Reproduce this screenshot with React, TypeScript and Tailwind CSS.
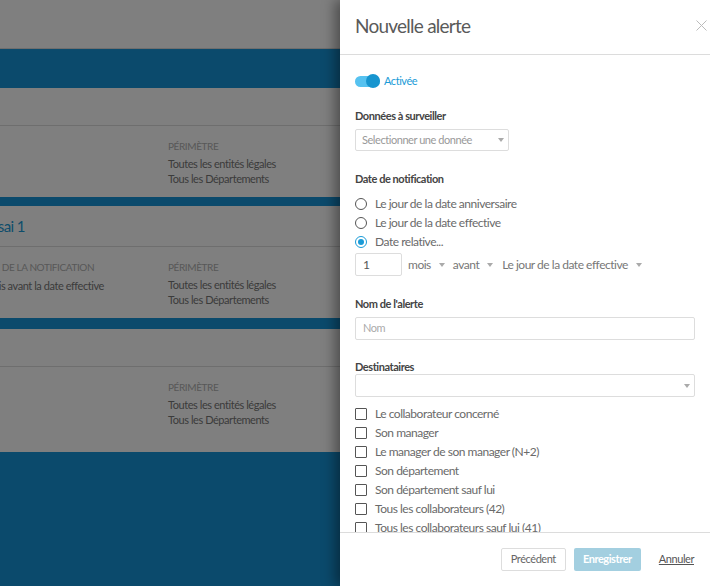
import React from "react";

const Caret = ({ className = "" }: { className?: string }) => (
  <span className={`inline-block w-0 h-0 border-l-[3px] border-r-[3px] border-t-[4px] border-l-transparent border-r-transparent border-t-[#aaa] ${className}`} />
);

const Checkbox = ({ label }: { label: string }) => (
  <div className="flex items-center h-[19px] gap-[8px]">
    <span className="w-[12px] h-[12px] border-[1.5px] border-[#555] rounded-[1px] shrink-0" />
    <span className="text-[12px] text-[#6a6a6a] leading-none tracking-[-0.04em]">{label}</span>
  </div>
);

const Radio = ({ label, checked = false }: { label: string; checked?: boolean }) => (
  <div className="flex items-center h-[19px] gap-[8px]">
    {checked ? (
      <span className="w-[12px] h-[12px] rounded-full border-[1.5px] border-[#1a9bd7] flex items-center justify-center shrink-0">
        <span className="w-[6px] h-[6px] rounded-full bg-[#1a9bd7]" />
      </span>
    ) : (
      <span className="w-[12px] h-[12px] rounded-full border-[1.5px] border-[#555] shrink-0" />
    )}
    <span className="text-[12px] text-[#6a6a6a] leading-none tracking-[-0.04em]">{label}</span>
  </div>
);

const Card = ({ title, notif, notifValue, top }: { title?: string; notif?: boolean; notifValue?: string; top: number }) => (
  <div className="bg-white">
    <div className={`border-b border-[#dcdcdc] flex items-center ${top === 2 ? "h-[41px]" : "h-[38px]"}`}>
      {title && <span className="text-[15px] text-[#1a9bd7] ml-[-16px] tracking-[-0.04em]">{title}</span>}
    </div>
    <div className={`flex ${top === 3 ? "h-[85px]" : "h-[71px]"}`}>
      <div className="w-[192px] ml-[-24px] pt-[13px]">
        {notif && (
          <>
            <div className="text-[10px] uppercase text-[#b0b0b0] leading-[14px] tracking-[-0.04em]">Date de la notification</div>
            <div className="text-[11px] text-[#777] leading-[14px] mt-[5px] tracking-[-0.04em]">{notifValue}</div>
          </>
        )}
      </div>
      <div className="pt-[13px]">
        <div className="text-[10px] uppercase text-[#b0b0b0] leading-[14px] tracking-[-0.04em]">Périmètre</div>
        <div className="text-[11px] text-[#777] leading-[14.5px] mt-[4px] tracking-[-0.04em]">Toutes les entités légales</div>
        <div className="text-[11px] text-[#777] leading-[14.5px] tracking-[-0.04em]">Tous les Départements</div>
      </div>
    </div>
  </div>
);

export default function App() {
  return (
    <div className="relative w-[710px] h-[586px] overflow-hidden bg-[#1694d8]" style={{ fontFamily: "Lato, 'Open Sans', sans-serif" }}>
      {/* underlying page */}
      <div className="flex flex-col">
        <div className="h-[49px] bg-white border-b border-[#dcdcdc]" />
        <div className="h-[39px] bg-[#1694d8]" />
        <Card top={1} />
        <div className="h-[9px] bg-[#1694d8]" />
        <Card top={2} title="Essai 1" notif notifValue="1 mois avant la date effective" />
        <div className="h-[11px] bg-[#1694d8]" />
        <Card top={3} />
      </div>
      {/* overlay */}
      <div className="absolute inset-0 bg-black/50" />
      {/* panel */}
      <div className="absolute top-0 right-0 w-[370px] h-[586px] bg-white flex flex-col shadow-[-5px_0_12px_rgba(0,0,0,0.4)]">
        <div className="h-[55px] border-b border-[#dcdcdc] flex items-center justify-between pl-[15px] pr-[3px] shrink-0">
          <span className="text-[19px] text-[#5a5a5a] mt-[-2px] tracking-[-0.04em]">Nouvelle alerte</span>
          <svg width="11" height="11" viewBox="0 0 11 11" className="mt-[-3px]">
            <path d="M0.5 0.5L10.5 10.5M10.5 0.5L0.5 10.5" stroke="#bbb" strokeWidth="1" />
          </svg>
        </div>
        <div className="flex-1 overflow-hidden px-[15px]">
          <div className="mt-[19px] h-[14px] flex items-center">
            <div className="relative w-[25px] h-[14px] flex items-center">
              <div className="w-[25px] h-[11px] rounded-full bg-[#56c2f0]" />
              <div className="absolute right-0 top-0 w-[14px] h-[14px] rounded-full bg-[#1795cf]" />
            </div>
            <span className="ml-[4px] text-[11px] text-[#1a9bd7] tracking-[-0.04em]">Activée</span>
          </div>
          <div className="mt-[21px] text-[11px] font-bold text-[#444] leading-[14px] tracking-[-0.04em]">Données à surveiller</div>
          <div className="mt-[6px] w-[154px] h-[22px] border border-[#ddd] rounded-[2px] flex items-center justify-between pl-[6px] pr-[4px]">
            <span className="text-[11px] text-[#999] tracking-[-0.04em]">Selectionner une donnée</span>
            <Caret />
          </div>
          <div className="mt-[21px] text-[11px] font-bold text-[#444] leading-[14px] tracking-[-0.04em]">Date de notification</div>
          <div className="mt-[8px]">
            <Radio label="Le jour de la date anniversaire" />
            <Radio label="Le jour de la date effective" />
            <Radio label="Date relative..." checked />
          </div>
          <div className="mt-[2px] flex items-center h-[23px]">
            <div className="w-[47px] h-[23px] border border-[#ddd] rounded-[2px] flex items-center pl-[7px] text-[12px] text-[#555]">1</div>
            <span className="ml-[6px] text-[12px] text-[#777] tracking-[-0.04em]">mois</span>
            <Caret className="ml-[8px]" />
            <span className="ml-[8px] text-[12px] text-[#777] tracking-[-0.04em]">avant</span>
            <Caret className="ml-[8px]" />
            <span className="ml-[9px] text-[12px] text-[#777] tracking-[-0.04em]">Le jour de la date effective</span>
            <Caret className="ml-[8px]" />
          </div>
          <div className="mt-[21px] text-[11px] font-bold text-[#444] leading-[14px] tracking-[-0.04em]">Nom de l'alerte</div>
          <div className="mt-[6px] h-[23px] border border-[#ddd] rounded-[2px] flex items-center pl-[7px]">
            <span className="text-[11px] text-[#aaa] tracking-[-0.04em]">Nom</span>
          </div>
          <div className="mt-[20px] text-[11px] font-bold text-[#444] leading-[14px] tracking-[-0.04em]">Destinataires</div>
          <div className="h-[23px] border border-[#ddd] rounded-[2px] flex items-center justify-end pr-[4px]">
            <Caret />
          </div>
          <div className="mt-[7px]">
            <Checkbox label="Le collaborateur concerné" />
            <Checkbox label="Son manager" />
            <Checkbox label="Le manager de son manager (N+2)" />
            <Checkbox label="Son département" />
            <Checkbox label="Son département sauf lui" />
            <Checkbox label="Tous les collaborateurs (42)" />
            <Checkbox label="Tous les collaborateurs sauf lui (41)" />
          </div>
        </div>
        <div className="h-[54px] border-t border-[#dcdcdc] flex items-center justify-end pr-[16px] shrink-0">
          <button className="w-[65px] h-[23px] border border-[#ddd] rounded-[2px] bg-white text-[11px] text-[#666] tracking-[-0.04em]">Précédent</button>
          <button className="ml-[8px] w-[67px] h-[23px] rounded-[2px] bg-[#a3cfe0] text-[11px] font-bold text-white tracking-[-0.04em]">Enregistrer</button>
          <span className="ml-[18px] text-[11px] text-[#555] underline tracking-[-0.04em]">Annuler</span>
        </div>
      </div>
    </div>
  );
}
